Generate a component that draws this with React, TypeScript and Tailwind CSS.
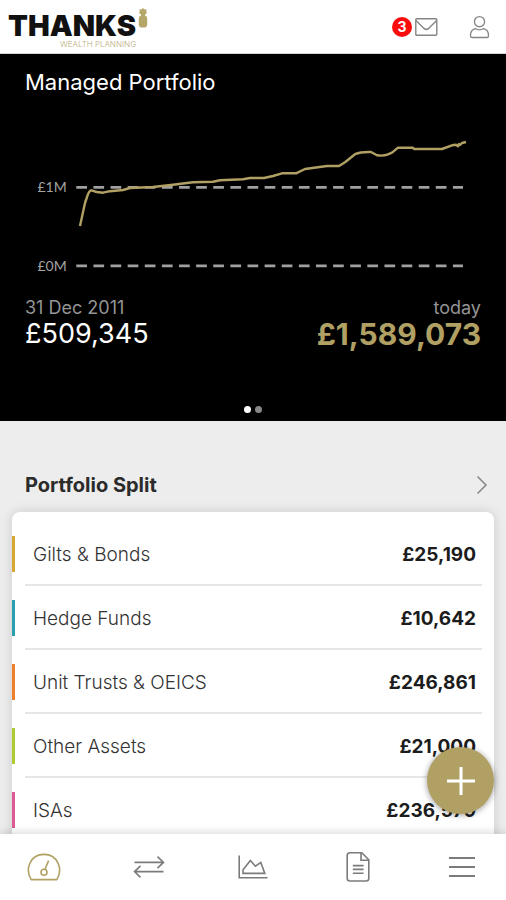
import type { ReactNode } from 'react';

interface Holding {
  name: string;
  value: string;
  bar: string;
}

const holdings: Holding[] = [
  { name: 'Gilts & Bonds', value: '£25,190', bar: 'bg-[#d9a833]' },
  { name: 'Hedge Funds', value: '£10,642', bar: 'bg-[#2c9fae]' },
  { name: 'Unit Trusts & OEICS', value: '£246,861', bar: 'bg-[#ee7f2d]' },
  { name: 'Other Assets', value: '£21,000', bar: 'bg-[#adcb33]' },
  { name: 'ISAs', value: '£236,579', bar: 'bg-[#dc5b92]' },
];

function Logo() {
  return (
    <a href="#" className="flex items-start self-start">
      <span className="flex flex-col items-end pt-3">
        <span className="text-[29px] leading-7 font-black text-[#111]">THANKS</span>
        <span className="text-[8px] leading-2 font-light text-[#b9ad7c]">WEALTH PLANNING</span>
      </span>
      {/* Pineapple mark */}
      <svg width="10" height="20" viewBox="0 0 10 20" fill="#b5a66a" className="mt-2 ml-0.5">
        <path d="M5 0 6.6 1.5 8.6 1.2 8.2 3.4 9 5 7.3 6.2 6.8 8H3.2L2.7 6.2 1 5 1.8 3.4 1.4 1.2 3.4 1.5Z" />
        <rect x="0.8" y="7.6" width="8.4" height="12" rx="3.4" />
      </svg>
    </a>
  );
}

function Header() {
  return (
    <header className="flex h-[54px] shrink-0 items-center justify-between border-b border-gray-300 bg-white pr-4 pl-2">
      <Logo />
      <div className="flex items-center gap-[31px]">
        <button type="button" aria-label="Messages" className="flex items-center gap-[3px]">
          <span className="flex size-5 items-center justify-center rounded-full bg-[#fb0d0d] text-sm font-bold text-white">
            3
          </span>
          <svg width="23" height="18" viewBox="0 0 23 18" fill="none" stroke="#858585" strokeWidth="1.4">
            <rect x="0.8" y="0.8" width="21" height="16.4" rx="1" />
            <path d="M1 2.6 9 10.4Q11.3 12.4 13.6 10.4L21.6 2.6" />
          </svg>
        </button>
        <button type="button" aria-label="Account">
          <svg width="21" height="24" viewBox="0 0 22 24" fill="none" stroke="#858585" strokeWidth="1.4">
            <circle cx="11" cy="6.4" r="5.3" />
            <path d="M6.8 13.6C3.4 14.6 1.6 17 1.6 20.2V21.4Q1.6 23 3.2 23H18.8Q20.4 23 20.4 21.4V20.2C20.4 17 18.6 14.6 15.2 13.6Q11 16.4 6.8 13.6Z" />
          </svg>
        </button>
      </div>
    </header>
  );
}

function PerformanceChart() {
  return (
    <svg viewBox="0 0 456 160" className="mt-6 block w-full" role="img" aria-label="Portfolio value">
      <g fill="#a3a3a3" fontSize="14" fontFamily="Lato, sans-serif">
        <text x="12.5" y="72.4">£1M</text>
        <text x="12.5" y="150.8">£0M</text>
      </g>
      <g stroke="#a0a0a0" strokeWidth="2.8" strokeDasharray="10.7 6.42">
        <path d="M51.3 67.4H438" />
        <path d="M51.3 145.8H438" />
      </g>
      <path
        d="M55 106 60 83 62.7 75 Q64.5 70.5 66.5 70.3L71.7 72 78 72.7 85 71.2 98 70 105 68 128 67 148 64.7 168 62.3 188 61.7 195 60.3 218 59.3 225 58H239L248 56 257 53.3H271L280 49 302 46H314L320 42.3 330 34.2Q336 31.6 346 32L352 35.2Q358 36.4 363 34.4L367 32.7 373 27.7H388L389 29H417L427 25.3 431 24.7 433 26.3 434 24 435 25 437 23 441 22"
        fill="none"
        stroke="#b0a064"
        strokeWidth="2.4"
        strokeLinejoin="round"
      />
    </svg>
  );
}

function ManagedPortfolio() {
  return (
    <section className="flex flex-col bg-black px-[25px] pt-[14px] pb-2">
      <h1 className="text-[22px] leading-7 text-white">Managed Portfolio</h1>
      <PerformanceChart />
      <div className="mt-4 flex items-start justify-between">
        <div>
          <p className="text-lg leading-6 text-[#949494]">31 Dec 2011</p>
          <p className="text-[27px] leading-7 text-white">£509,345</p>
        </div>
        <div className="text-right">
          <p className="text-lg leading-6 text-[#949494]">today</p>
          <p className="text-[30px] leading-7 font-bold text-[#b0a064]">£1,589,073</p>
        </div>
      </div>
      <div className="mt-[58px] flex justify-center gap-1">
        <span className="size-[7px] rounded-full bg-white" />
        <span className="size-[7px] rounded-full bg-[#888]" />
      </div>
    </section>
  );
}

function PortfolioSplit() {
  return (
    <section className="pt-[52px]">
      <a href="#" className="flex items-center justify-between pr-[18px] pb-[15px] pl-[25px]">
        <h2 className="text-[20px] leading-6 font-bold text-[#2b2b2b]">Portfolio Split</h2>
        <svg width="12" height="20" viewBox="0 0 12 20" fill="none" stroke="#8a8a8a" strokeWidth="1.6">
          <path d="M1.5 1.5 10 10 1.5 18.5" />
        </svg>
      </a>
      <ul className="mx-3 rounded-t-lg bg-white pt-2.5 shadow-[0_0_12px_rgba(0,0,0,0.15)]">
        {holdings.map((holding) => (
          <li key={holding.name} className="flex h-16 items-center">
            <span className={`h-9 w-[3px] ${holding.bar}`} />
            <div className="mr-3 ml-2.5 flex h-full flex-1 items-center justify-between border-b-2 border-[#e6e6e6] pt-1 pr-1.5 pl-2">
              <span className="text-[19px] font-light text-[#333]">{holding.name}</span>
              <span className="text-[19px] font-bold text-[#1c1c1c]">{holding.value}</span>
            </div>
          </li>
        ))}
      </ul>
    </section>
  );
}

function NavButton({ label, active, children }: { label: string; active?: boolean; children: ReactNode }) {
  return (
    <button
      type="button"
      aria-label={label}
      className={`flex size-10 items-center justify-center ${active ? 'text-[#b0a064]' : 'text-[#7b7b7b]'}`}
    >
      <svg width="36" height="32" viewBox="0 0 36 32" fill="none" stroke="currentColor" strokeWidth="1.6">
        {children}
      </svg>
    </button>
  );
}

function BottomNav() {
  return (
    <nav className="relative flex h-[66px] shrink-0 items-center justify-between bg-white px-6 shadow-[0_0_10px_rgba(0,0,0,0.2)]">
      <NavButton label="Dashboard" active>
        <path d="M5.2 28.6C-1.4 18 4.4 3.4 18 3.4S37.4 18 30.8 28.6Z" strokeLinejoin="round" />
        <circle cx="18" cy="21.2" r="3" />
        <path d="M19 18.3 22.6 9.6" />
      </NavButton>
      <NavButton label="Transactions">
        <path d="M3.5 11.4H32.5M26.5 5.6 32.5 11.4 26.5 17.2" />
        <path d="M32.5 20.6H3.5M9.5 14.8 3.5 20.6 9.5 26.4" />
      </NavButton>
      <NavButton label="Performance">
        <path d="M4.2 4.6V26.8H32.5" />
        <path d="M8 22.4V18.8L15.4 9.4 20.4 15.2 25.8 11.4 29.8 22.4Z" />
      </NavButton>
      <NavButton label="Documents">
        <path d="M21.8 1.8H10Q7.2 1.8 7.2 4.6V27.2Q7.2 30 10 30H26Q28.8 30 28.8 27.2V8.8Z" />
        <path d="M21 1.8V9.2H28.8M12.8 14.6H23.6M12.8 18.4H23.6M12.8 22.2H23.6" />
      </NavButton>
      <NavButton label="Menu">
        <path d="M5 7H31M5 16H31M5 25H31" strokeWidth="2" />
      </NavButton>
    </nav>
  );
}

export default function App() {
  return (
    <div className="flex h-screen flex-col overflow-hidden bg-[#ededed] font-[Inter,sans-serif]">
      <Header />
      <div className="relative flex min-h-0 flex-1 flex-col">
        <main className="flex-1 overflow-y-auto [scrollbar-width:none]">
          <ManagedPortfolio />
          <PortfolioSplit />
        </main>
        {/* Floating add button */}
        <button
          type="button"
          aria-label="Add"
          className="absolute right-3 bottom-5 flex size-[67px] items-center justify-center rounded-full bg-[#b0a064] shadow-[0_1px_6px_rgba(0,0,0,0.4)]"
        >
          <svg width="30" height="30" viewBox="0 0 30 30" fill="none" stroke="white" strokeWidth="3">
            <path d="M15 1V29M1 15H29" />
          </svg>
        </button>
      </div>
      <BottomNav />
    </div>
  );
}
